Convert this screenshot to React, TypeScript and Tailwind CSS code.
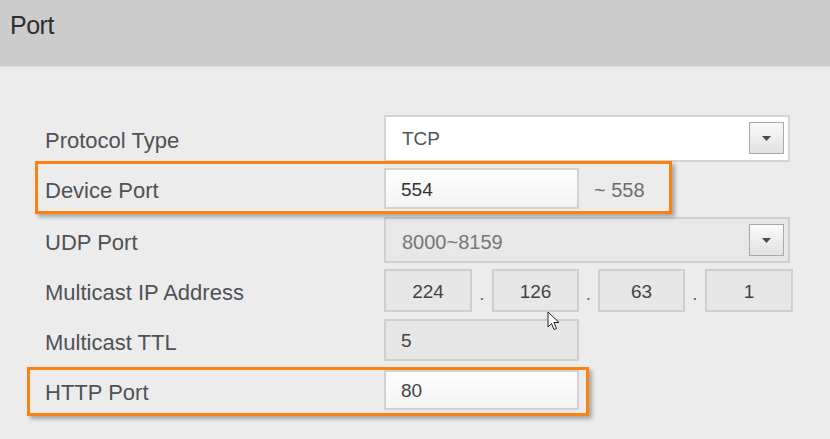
import React from "react";

const FONT = { fontFamily: '"Liberation Sans", Arial, sans-serif' };

function DropButton() {
  return (
    <div className="w-[35px] h-[32px] border border-[#a9a9a9] bg-gradient-to-b from-[#fafafa] to-[#e2e2e2] flex items-center justify-center">
      <svg width="9" height="5" viewBox="0 0 9 5">
        <path d="M0 0 H9 L4.5 5 Z" fill="#4a4a4a" />
      </svg>
    </div>
  );
}

function Row({ label, h, children }: { label: string; h: string; children: React.ReactNode }) {
  return (
    <div className={`flex items-center ${h}`}>
      <div className="w-[339px] pt-[5px] text-[22px] text-[#4e5258] leading-none">{label}</div>
      {children}
    </div>
  );
}

function IpBox({ v, w }: { v: string; w: string }) {
  return (
    <div className={`${w} h-[43px] border-2 border-[#cfcfcf] bg-[#e7e7e7] flex items-center justify-center pt-[3px] text-[19px] text-[#444]`}>
      {v}
    </div>
  );
}

function Dot({ w }: { w: string }) {
  return <div className={`${w} h-[43px] flex items-end justify-center pb-[9px] text-[19px] text-[#666] leading-none`}>.</div>;
}

export default function App() {
  return (
    <div className="w-[830px] h-[439px] bg-[#ebeceb] relative overflow-hidden" style={FONT}>
      <div className="h-[67px] bg-[#cccccc] border-b border-[#dedede] pl-[10px] pt-[11px]">
        <div className="text-[25px] leading-[28px] text-[#2e2e2e] tracking-[-0.5px]">Port</div>
      </div>

      <div className="pl-[45px] pt-[46px]">
        <Row label="Protocol Type" h="h-[50px]">
          <div className="w-[406px] h-[47px] border-2 border-[#d4d4d4] bg-white flex items-center justify-between pl-[16px] pr-[4px]">
            <span className="pt-[3px] text-[19px] text-[#555]">TCP</span>
            <DropButton />
          </div>
        </Row>

        <Row label="Device Port" h="h-[51px]">
          <div className="w-[195px] h-[41px] border-2 border-[#d2d2d2] bg-gradient-to-b from-white to-[#f3f3f3] flex items-center pl-[15px] pt-[3px] text-[19px] text-[#333]">
            554
          </div>
          <span className="ml-[15px] pt-[3px] text-[20px] text-[#6e6e6e]">~ 558</span>
        </Row>

        <Row label="UDP Port" h="h-[52px]">
          <div className="w-[406px] h-[46px] border-2 border-[#cfcfcf] bg-[#e8e8e8] flex items-center justify-between pl-[16px] pr-[4px]">
            <span className="pt-[3px] text-[20px] text-[#777]">8000~8159</span>
            <DropButton />
          </div>
        </Row>

        <Row label="Multicast IP Address" h="h-[49px]">
          <div className="flex items-center">
            <IpBox v="224" w="w-[88px]" />
            <Dot w="w-[20px]" />
            <IpBox v="126" w="w-[87px]" />
            <Dot w="w-[19px]" />
            <IpBox v="63" w="w-[87px]" />
            <Dot w="w-[20px]" />
            <IpBox v="1" w="w-[88px]" />
          </div>
        </Row>

        <Row label="Multicast TTL" h="h-[50px]">
          <div className="w-[195px] h-[42px] border-2 border-[#cfcfcf] bg-[#e7e7e7] flex items-center pl-[15px] pt-[3px] text-[19px] text-[#444]">
            5
          </div>
        </Row>

        <Row label="HTTP Port" h="h-[50px]">
          <div className="w-[195px] h-[40px] border-2 border-[#d2d2d2] bg-gradient-to-b from-white to-[#f3f3f3] flex items-center pl-[15px] pt-[3px] text-[19px] text-[#444]">
            80
          </div>
        </Row>
      </div>

      {/* highlight annotations */}
      <div className="absolute left-[35px] top-[161px] w-[637px] h-[53px] border-[3px] border-[#fb8113] shadow-[3px_3px_4px_rgba(0,0,0,0.3)]" />
      <div className="absolute left-[27px] top-[367px] w-[562px] h-[49px] border-[3px] border-[#fb8113] shadow-[3px_3px_4px_rgba(0,0,0,0.3)]" />

      {/* mouse pointer */}
      <svg className="absolute left-[547px] top-[311px]" width="13" height="20" viewBox="0 0 13 20">
        <path d="M1 1 L1 16 L4.5 12.5 L7 18.5 L9.5 17.5 L7 11.5 L12 11.5 Z" fill="#fff" stroke="#222" strokeWidth="1" strokeLinejoin="round" />
      </svg>
    </div>
  );
}
